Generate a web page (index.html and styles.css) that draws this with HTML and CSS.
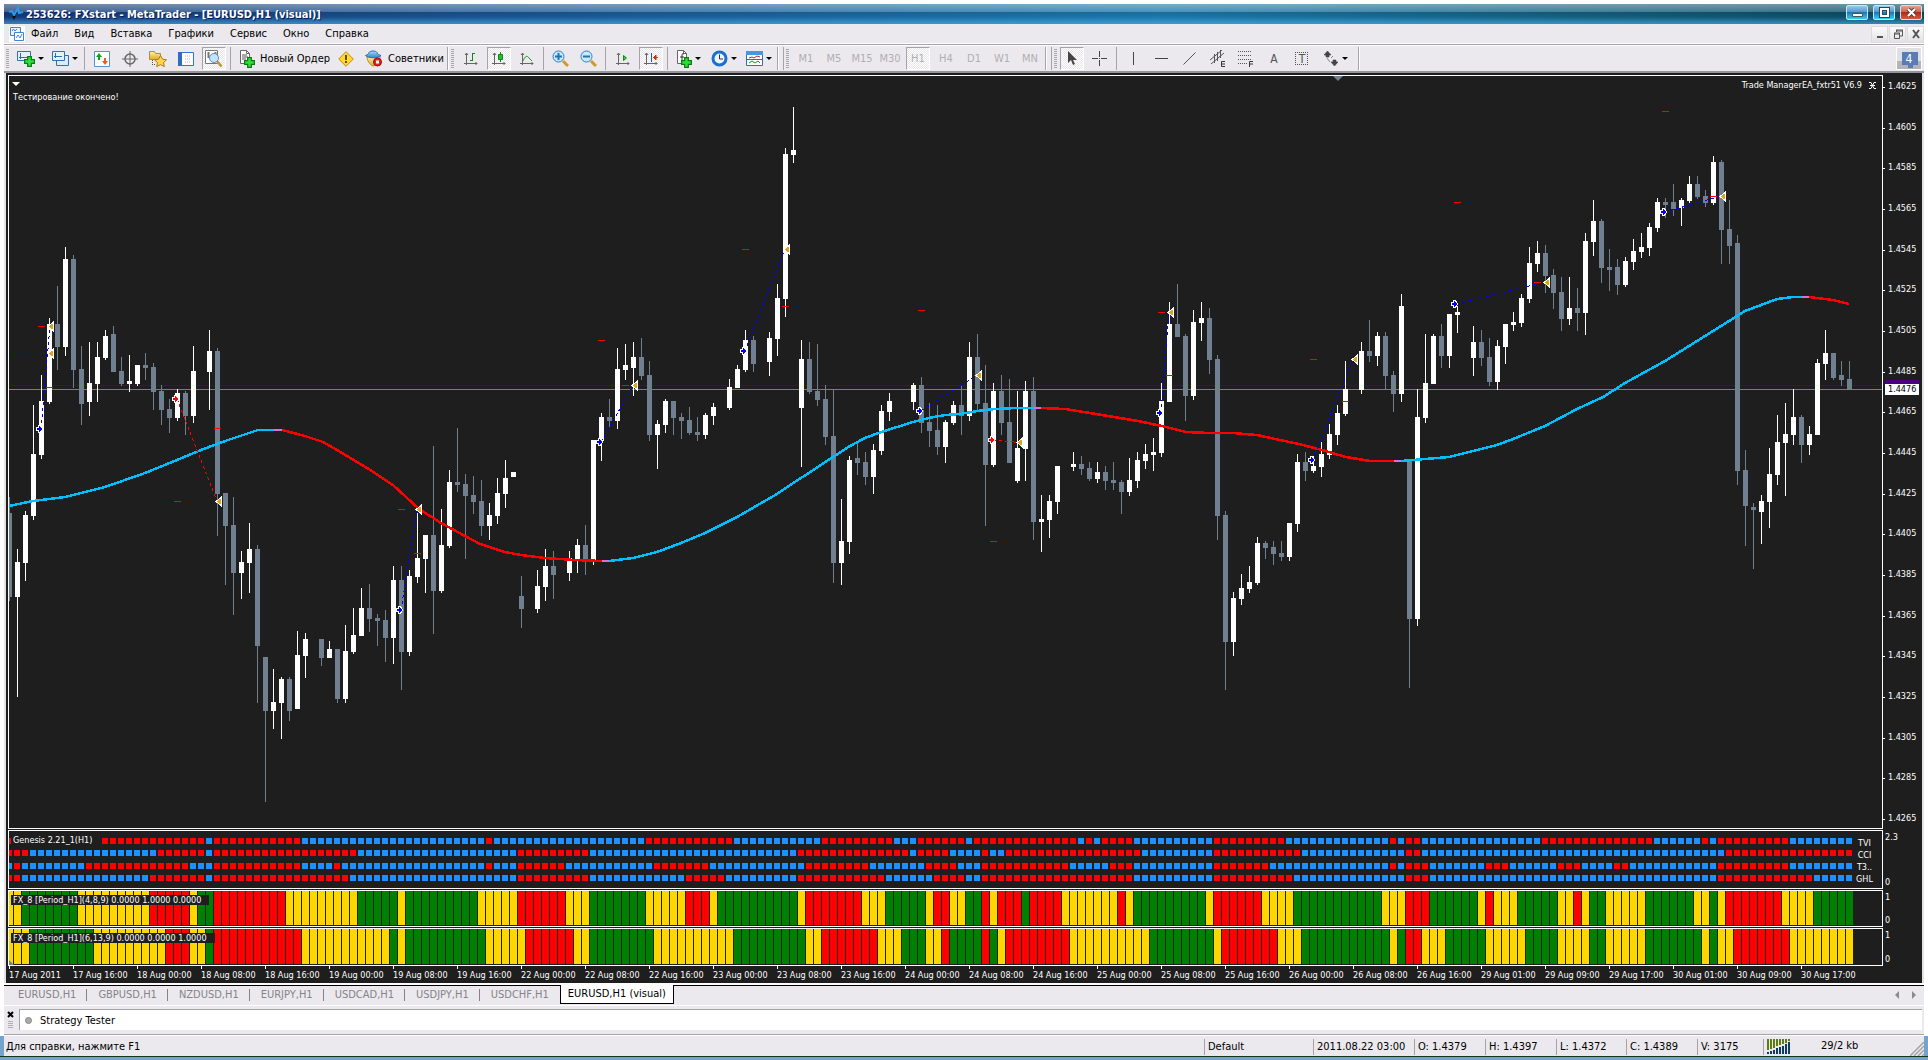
FILE: index.html
```html
<!DOCTYPE html>
<html lang="ru">
<head>
<meta charset="utf-8">
<title>253626: FXstart - MetaTrader - [EURUSD,H1 (visual)]</title>
<link rel="stylesheet" href="styles.css">
</head>
<body>
<svg class="defs" aria-hidden="true">
  <defs>
    <linearGradient id="gold" x1="0" y1="0" x2="0" y2="1"><stop offset="0" stop-color="#fff3a8"/><stop offset="1" stop-color="#e3a92c"/></linearGradient>
    <linearGradient id="bluehat" x1="0" y1="0" x2="0" y2="1"><stop offset="0" stop-color="#a8d8f8"/><stop offset="1" stop-color="#2f86c8"/></linearGradient>
    <symbol id="plus" viewBox="0 0 9 9"><path d="M3 .5h3V3h2.500v3H6v2.500H3V6H.5V3H3z" fill="#2fe03a" stroke="#0a7d12"/></symbol>
    <symbol id="axes" viewBox="0 0 14 14"><path d="M2.500 1v12M0 11.500h13M1 3l1.500-2L4 3M11.500 10l1.500 1.500L11.500 13" fill="none" stroke="#666"/></symbol>
    <symbol id="page" viewBox="0 0 12 14"><path d="M1.500.5h6l3 3v10h-9z" fill="#fff" stroke="#666"/><path d="M7.500.5v3h3" fill="none" stroke="#666"/></symbol>
  </defs>
</svg>
<div class="window">
  <header class="titlebar">
    <svg class="logo" width="16" height="16" viewBox="0 0 16 16"><path d="M1 7l3-1 2 4 4-7 1 5 4-1" fill="none" stroke="#2e9be8" stroke-width="2"/><path d="M4 11l2 4 2-4z" fill="#111"/></svg>
    <h1>253626: FXstart - MetaTrader - [EURUSD,H1 (visual)]</h1>
    <div class="caption">
      <button class="cap" aria-label="Minimize"><svg width="11" height="11" viewBox="0 0 11 11"><path d="M.5 6.500h10v3H.5z" fill="#fff" stroke="#456"/></svg></button>
      <button class="cap" aria-label="Maximize"><svg width="11" height="11" viewBox="0 0 11 11"><path d="M2 2h7v7H2z" fill="none" stroke="#345" stroke-width="4"/><path d="M2 2h7v7H2z" fill="none" stroke="#fff" stroke-width="2"/></svg></button>
      <button class="cap close" aria-label="Close"><svg width="11" height="11" viewBox="0 0 11 11"><path d="M2 2l7 7M9 2l-7 7" stroke="#544" stroke-width="4"/><path d="M2 2l7 7M9 2l-7 7" stroke="#fff" stroke-width="2"/></svg></button>
    </div>
  </header>
  <nav class="menubar">
    <svg class="mdi" width="16" height="16" viewBox="0 0 16 16"><rect width="16" height="16" fill="#fff"/><path d="M1.500 1.500h10v8h-10z" fill="#e8f3ff" stroke="#3b86d8"/><path d="M5.500 6.500h9v8h-9z" fill="#fff" stroke="#3b86d8"/><path d="M3 5l1.500-2L6 5l2-2M7 12l2-3 2 3 2-4" fill="none" stroke="#3b86d8"/></svg>
    <a href="#file">Файл</a><a href="#view">Вид</a><a href="#insert">Вставка</a><a href="#charts">Графики</a><a href="#tools">Сервис</a><a href="#window">Окно</a><a href="#help">Справка</a>
    <div class="mdibtns">
      <button aria-label="Minimize chart"><svg width="10" height="10" viewBox="0 0 10 10"><path d="M2 8h6" stroke="#555" stroke-width="2"/></svg></button>
      <button aria-label="Restore chart"><svg width="10" height="10" viewBox="0 0 10 10"><path d="M3 1h7M3 2h7M9.500 1v6H7M3.500 1v2" fill="none" stroke="#555"/><path d="M1 4h6M1 5h6M1.500 4v5.500h5V4" fill="none" stroke="#555"/></svg></button>
      <button aria-label="Close chart"><svg width="10" height="10" viewBox="0 0 10 10"><path d="M2 1l6 8M8 1L2 9" stroke="#555" stroke-width="2"/></svg></button>
    </div>
  </nav>
  <div class="toolbar">
    <div class="group">
      <i class="grip"></i>
      <button class="tb drop" aria-label="New chart"><svg width="18" height="16" viewBox="0 0 18 16"><path d="M.5.5h13v9H.5z" fill="#e4f2ff" stroke="#2b70b8"/><path d="M3.500 2v6M2 6.500h9" stroke="#2b70b8"/><use href="#plus" x="7" y="5" width="11" height="11"/></svg></button>
      <button class="tb drop" aria-label="Profiles"><svg width="17" height="15" viewBox="0 0 17 15"><path d="M4.500 4.500h12v10h-12z" fill="#dcebf8" stroke="#2b70b8"/><path d="M.5.5h12v9H.5z" fill="#e4f2ff" stroke="#2b70b8" stroke-width="1"/><path d="M3.500 2v5M2 5.500h8" stroke="#2b70b8"/></svg></button>
      <i class="sep"></i>
      <button class="tb" aria-label="Market Watch"><svg width="16" height="16" viewBox="0 0 16 16"><path d="M.5.5h15v15H.5z" fill="#fff" stroke="#4b95d8"/><path d="M2 6l3-4 3 4H6v3H4V6z" fill="#0aa31a"/><path d="M8 10h2V7h2v3h2l-3 4z" fill="#ee5a24"/></svg></button>
      <button class="tb" aria-label="Data Window"><svg width="16" height="16" viewBox="0 0 16 16"><circle cx="8" cy="8" r="5" fill="none" stroke="#666" stroke-width="1.500"/><path d="M8 0v16M0 8h16" stroke="#666"/></svg></button>
      <button class="tb" aria-label="Navigator"><svg width="18" height="17" viewBox="0 0 18 17"><path d="M.5 1.500h5l1 2h5v6H.5z" fill="url(#gold)" stroke="#c08a1c"/><path d="M11.500 5.500l2 3.700 4 .6-3 2.800.8 4-3.800-2-3.800 2 .8-4-3-2.800 4-.6z" fill="#ffd84a" stroke="#b07812"/><path d="M3.500 10v6M3 14.500h4" stroke="#555" stroke-dasharray="1 1"/></svg></button>
      <button class="tb" aria-label="Terminal"><svg width="16" height="14" viewBox="0 0 16 14"><path d="M.5.5h15v13H.5z" fill="#fff" stroke="#2c7ad0"/><path d="M0 0h4v14H0z" fill="#2c6fc0"/><path d="M7 4h6M7 7h6M7 10h6" stroke="#f0a0a0" stroke-dasharray="1 1"/></svg></button>
      <button class="tb on" aria-label="Strategy Tester"><svg width="18" height="17" viewBox="0 0 18 17"><path d="M.5.5h12v13H.5z" fill="#fff" stroke="#777"/><path d="M3.500 2v6M10.500 2v4" stroke="#777" stroke-width="2"/><circle cx="9" cy="8" r="4.500" fill="#c5e4fa" stroke="#5b8db8"/><path d="M12.500 11.500l4 5" stroke="#c8962c" stroke-width="2.500"/></svg></button>
      <i class="sep"></i>
      <button class="tb text"><svg width="16" height="18" viewBox="0 0 16 18"><use href="#page" width="12" height="14"/><path d="M3 5h5M3 7h6M3 9h4" stroke="#555"/><use href="#plus" x="5" y="7" width="11" height="11"/></svg>Новый Ордер</button>
      <button class="tb" aria-label="MetaEditor"><svg width="16" height="16" viewBox="0 0 16 16"><path d="M8 .7L15.300 8 8 15.300.7 8z" fill="#ffd92e" stroke="#c08a10"/><path d="M8 4v5M8 10v2" stroke="#6b4a00" stroke-width="2"/></svg></button>
      <button class="tb text"><svg width="18" height="17" viewBox="0 0 18 17"><path d="M2 6h13c0 6-2 9-7 10C5 15 2 11 2 6z" fill="url(#gold)" stroke="#c08a1c"/><path d="M.5 5.500c2-1 3-1 3.500-3C5 .5 11 .5 12 2.500c0 2 2 2 4 3-2 3-13 3-15.500 0z" fill="url(#bluehat)" stroke="#2a6ea8"/><circle cx="12.500" cy="12" r="4" fill="#e32222" stroke="#9c0d0d"/><path d="M11 10.500h3v3h-3z" fill="#fff"/></svg>Советники</button>
    </div>
    <div class="group">
      <i class="grip"></i>
      <button class="tb" aria-label="Bar chart"><svg width="14" height="14" viewBox="0 0 14 14"><use href="#axes"/><path d="M8.500 1v8M8.500 1.500H11M6 8.500h2.500" stroke="#0b8a18" fill="none"/></svg></button>
      <button class="tb on" aria-label="Candlesticks"><svg width="14" height="14" viewBox="0 0 14 14"><use href="#axes"/><path d="M8.500 0v10" stroke="#0b8a18"/><path d="M6.500 2.500h4v5h-4z" fill="#19c42a" stroke="#0b8a18"/></svg></button>
      <button class="tb" aria-label="Line chart"><svg width="14" height="14" viewBox="0 0 14 14"><use href="#axes"/><path d="M3 9c2-5 4-6 6-3l3 3" stroke="#1c9a28" fill="none"/></svg></button>
      <i class="sep"></i>
      <button class="tb" aria-label="Zoom in"><svg width="17" height="17" viewBox="0 0 17 17"><path d="M11 11l5 5" stroke="#cf9a26" stroke-width="3"/><circle cx="6.500" cy="6.500" r="5.500" fill="#c7e9fb" stroke="#2f7fc4"/><path d="M3 6.500h7M6.500 3v7" stroke="#2a6fb4" stroke-width="2"/></svg></button>
      <button class="tb" aria-label="Zoom out"><svg width="17" height="17" viewBox="0 0 17 17"><path d="M11 11l5 5" stroke="#cf9a26" stroke-width="3"/><circle cx="6.500" cy="6.500" r="5.500" fill="#c7e9fb" stroke="#2f7fc4"/><path d="M3 6.500h7" stroke="#2a6fb4" stroke-width="2"/></svg></button>
      <i class="sep"></i>
      <button class="tb" aria-label="Auto scroll"><svg width="14" height="14" viewBox="0 0 14 14"><use href="#axes"/><path d="M7.500 3.500v5l3-2.500z" fill="#3c4" stroke="#0b8a18"/></svg></button>
      <button class="tb on" aria-label="Chart shift"><svg width="14" height="14" viewBox="0 0 14 14"><use href="#axes"/><path d="M7.500 1v9" stroke="#1d5fa0"/><path d="M14 5.500H9M12 3L9.500 5.500 12 8z" fill="#c3380c" stroke="#c3380c"/></svg></button>
      <i class="sep"></i>
      <button class="tb drop" aria-label="Indicators"><svg width="16" height="18" viewBox="0 0 16 18"><use href="#page" width="12" height="14"/><path d="M8 4c-2-1-2 0-2 2v5M4 7h4" fill="none" stroke="#333"/><use href="#plus" x="5" y="7" width="11" height="11"/></svg></button>
      <button class="tb drop" aria-label="Periods"><svg width="17" height="17" viewBox="0 0 17 17"><circle cx="8.500" cy="8.500" r="6.500" fill="#eef6fc" stroke="#1a6fd0" stroke-width="3"/><path d="M8.500 4.500v4.500H12" fill="none" stroke="#334"/></svg></button>
      <button class="tb drop" aria-label="Templates"><svg width="17" height="15" viewBox="0 0 17 15"><path d="M.5.5h16v14H.5z" fill="#fff" stroke="#2c70b8"/><path d="M0 0h17v4H0z" fill="#4a96dc"/><path d="M1 8.500h15" stroke="#2c70b8"/><path d="M3 7l3-1 2 1 3-2 3 1" fill="none" stroke="#b03010"/><path d="M3 12l3-2 3 2 3-2 2 2" fill="none" stroke="#1c9a28"/></svg></button>
    </div>
    <div class="group apart periods">
      <i class="grip"></i>
      <button class="tb">M1</button><button class="tb">M5</button><button class="tb">M15</button><button class="tb">M30</button><button class="tb on">H1</button><button class="tb">H4</button><button class="tb">D1</button><button class="tb">W1</button><button class="tb">MN</button>
    </div>
    <div class="group apart">
      <i class="grip"></i>
      <button class="tb on" aria-label="Cursor"><svg width="10" height="15" viewBox="0 0 10 15"><path d="M1 0v12l3-3 2 5 2-1-2-4h4z" fill="#444"/></svg></button>
      <button class="tb" aria-label="Crosshair"><svg width="15" height="15" viewBox="0 0 15 15"><path d="M7.500 0v6M7.500 9v6M0 7.500h6M9 7.500h6M7 7.500h1" stroke="#444"/></svg></button>
      <i class="sep"></i>
      <button class="tb" aria-label="Vertical line"><svg width="14" height="13" viewBox="0 0 14 13"><path d="M6.500 0v13" stroke="#444"/></svg></button>
      <button class="tb" aria-label="Horizontal line"><svg width="14" height="13" viewBox="0 0 14 13"><path d="M0 6.500h13" stroke="#444"/></svg></button>
      <button class="tb" aria-label="Trend line"><svg width="14" height="13" viewBox="0 0 14 13"><path d="M.5 12.500l12-12" stroke="#555"/></svg></button>
      <button class="tb" aria-label="Channel"><svg width="16" height="17" viewBox="0 0 16 17"><path d="M0 10L12 0M1 14L14 3M4.500 4v9M7.500 2v9M10.500 0v8" stroke="#555" fill="none"/><path d="M15 11.500h-3.500v5H15M11.500 14H15" fill="none" stroke="#333"/></svg></button>
      <button class="tb" aria-label="Fibonacci"><svg width="16" height="17" viewBox="0 0 16 17"><path d="M0 1.500h14M0 5.500h14M0 9.500h14M0 13.500h9" stroke="#555" stroke-dasharray="1 1"/><path d="M15 11.500h-3.500V17M11.500 14H15" fill="none" stroke="#333"/></svg></button>
      <button class="tb glyph" aria-label="Text">A</button>
      <button class="tb glyph" aria-label="Label"><span class="boxed">T</span></button>
      <button class="tb drop arrows" aria-label="Arrows"><svg width="14" height="15" viewBox="0 0 14 15"><path d="M0 4l3.500-4L7 4H5v2H2V4zM7 11h2V9h3v2h2l-3.500 4zM3 7l3 4M7 7l2-2" fill="#444" stroke="#444" stroke-width=".6"/></svg></button>
    </div>
    <button class="news">4</button>
  </div>

  <main class="chart">
    <section class="pane price">
      <div class="plot">
        <svg id="priceplot" viewBox="9 76 1873 752" preserveAspectRatio="none"></svg>
        <i class="menuarrow"></i>
        <span class="comment">Тестирование окончено!</span>
        <i class="shift"></i>
        <span class="expert">Trade ManagerEA_fxtr51 V6.9 <svg width="7" height="7" viewBox="0 0 7 7"><path d="M0 .5h2l3 6h2M7 .5H5l-3 6H0M1 3.500h5" fill="none" stroke="#fff"/></svg></span>
      </div>
      <div class="scale">
        <span>1.4625</span><span>1.4605</span><span>1.4585</span><span>1.4565</span><span>1.4545</span><span>1.4525</span><span>1.4505</span><span>1.4485</span><span>1.4465</span><span>1.4445</span><span>1.4425</span><span>1.4405</span><span>1.4385</span><span>1.4365</span><span>1.4345</span><span>1.4325</span><span>1.4305</span><span>1.4285</span><span>1.4265</span>
        <b class="bid">1.4476</b>
      </div>
    </section>
    <section class="pane genesis">
      <div class="plot">
        <svg id="genesisplot" viewBox="9 831 1873 57" preserveAspectRatio="none"></svg>
        <span class="label">Genesis 2.21_1(H1)</span>
        <ul class="rows"><li>TVI</li><li>CCI</li><li>T3..</li><li>GHL</li></ul>
      </div>
      <div class="scale"><span>2.3</span><span>0</span></div>
    </section>
    <section class="pane fx">
      <div class="plot">
        <svg id="fx1plot" viewBox="9 0 1873 35" preserveAspectRatio="none"></svg>
        <span class="label">FX_8 [Period_H1](4,8,9) 0.0000 1.0000 0.0000</span>
      </div>
      <div class="scale"><span>1</span><span>0</span></div>
    </section>
    <section class="pane fx last">
      <div class="plot">
        <svg id="fx2plot" viewBox="9 0 1873 36" preserveAspectRatio="none"></svg>
        <span class="label">FX_8 [Period_H1](6,13,9) 0.0000 0.0000 1.0000</span>
      </div>
      <div class="scale"><span>1</span><span>0</span></div>
    </section>
    <div class="dates">
      <span>17 Aug 2011</span><span>17 Aug 16:00</span><span>18 Aug 00:00</span><span>18 Aug 08:00</span><span>18 Aug 16:00</span><span>19 Aug 00:00</span><span>19 Aug 08:00</span><span>19 Aug 16:00</span><span>22 Aug 00:00</span><span>22 Aug 08:00</span><span>22 Aug 16:00</span><span>23 Aug 00:00</span><span>23 Aug 08:00</span><span>23 Aug 16:00</span><span>24 Aug 00:00</span><span>24 Aug 08:00</span><span>24 Aug 16:00</span><span>25 Aug 00:00</span><span>25 Aug 08:00</span><span>25 Aug 16:00</span><span>26 Aug 00:00</span><span>26 Aug 08:00</span><span>26 Aug 16:00</span><span>29 Aug 01:00</span><span>29 Aug 09:00</span><span>29 Aug 17:00</span><span>30 Aug 01:00</span><span>30 Aug 09:00</span><span>30 Aug 17:00</span>
    </div>
  </main>

  <div class="tabs">
    <button>EURUSD,H1</button><button>GBPUSD,H1</button><button>NZDUSD,H1</button><button>EURJPY,H1</button><button>USDCAD,H1</button><button>USDJPY,H1</button><button>USDCHF,H1</button><button class="active">EURUSD,H1 (visual)</button>
    <svg class="pager" width="22" height="8" viewBox="0 0 22 8"><path d="M4 0v8L0 4zM17 0v8l4-4z" fill="#8a8a90"/></svg>
  </div>
  <div class="tester">
    <div class="handle"><svg width="7" height="20" viewBox="0 0 7 20"><path d="M1 1l5 5M6 1L1 6" stroke="#000" stroke-width="2"/><path d="M1 10.500h5M1 12.500h5M1 14.500h5M1 16.500h5" stroke="#b0aeb4"/></svg></div>
    <div class="testerbox"><i class="dot"></i>Strategy Tester</div>
  </div>
  <footer class="status">
    <span class="hint">Для справки, нажмите F1</span>
    <span class="s108">Default</span><span class="s100">2011.08.22 03:00</span><span class="s72">O: 1.4379</span><span class="s72">H: 1.4397</span><span class="s68">L: 1.4372</span><span class="s72">C: 1.4389</span><span class="s66">V: 3175</span>
    <span class="net"><svg width="23" height="15" viewBox="0 0 23 15"><path d="M1 0v11M4 0v10M7 0v9M10 0v7M13 0v6M16 0v5M19 0v4M22 0v2" stroke="#5c7d10" stroke-width="2"/><path d="M1 13v2M4 12v3M7 11v4M10 9v6M13 8v7M16 7v8M19 5v10M22 3v12" stroke="#0c3d60" stroke-width="2"/></svg>29/2 kb</span>
    <svg class="resize" width="14" height="14" viewBox="0 0 14 14"><path d="M0 14L14 0M4 14L14 4M8 14l6-6M12 14l2-2" stroke="#a5a3a8" stroke-width="1.500"/></svg>
  </footer>
</div>
<script src="chart.js"></script>
</body>
</html>
```
FILE: styles.css
```css
* { box-sizing: border-box; }
body {
  margin: 0;
  background: #fff;
  color: #000;
  font: 11px/14px "DejaVu Sans Condensed", "DejaVu Sans", sans-serif;
}
button { font: inherit; color: inherit; border: 0; padding: 0; background: none; }
svg { display: block; }
i, b { font-style: normal; font-weight: normal; }
.defs { position: absolute; width: 0; height: 0; }
.window {
  min-height: 100vh;
  display: flex;
  flex-direction: column;
  padding: 4px 4px 0;
}

.titlebar {
  flex: none;
  height: 20px;
  display: flex;
  align-items: flex-start;
  padding: 1px 2px 0 4px;
  background:
    linear-gradient(rgba(255,255,255,.4) 0, rgba(255,255,255,.2) 8px, rgba(0,0,0,.1) 8px, rgba(0,0,0,0) 13px, rgba(80,180,235,.55) 19px),
    linear-gradient(90deg, #163a78, #1b5f9a 35%, #1c78ac 60%, #14607f 82%, #0b4a62);
}
.titlebar h1 {
  flex: 1;
  margin: 3px 0 0 2px;
  font-size: 11px;
  font-weight: bold;
  color: #fff;
  text-shadow: 1px 1px 0 #06195c;
  white-space: nowrap;
}
.caption { display: flex; gap: 5px; }
.cap {
  width: 22px;
  height: 15px;
  display: grid;
  place-items: center;
  border: 1px solid #cfe3ee;
  border-radius: 2px;
  background: linear-gradient(#9cc8e8, #4a94d0 50%, #1c78b8 50%, #2fd0f4);
}
.cap.close { background: linear-gradient(#eaa090, #d05c4a 50%, #b02a18 50%, #d85a3c); }

.menubar {
  flex: none;
  height: 19px;
  display: flex;
  align-items: center;
  gap: 16px;
  padding: 1px 0 0 5px;
  background: #ebe9ed;
}
.menubar .mdi { margin-right: -10px; }
.menubar a { color: #000; text-decoration: none; }
.mdibtns { margin-left: auto; display: flex; gap: 1px; }
.mdibtns button {
  width: 17px;
  height: 17px;
  display: grid;
  place-items: center;
  background: linear-gradient(#fbfbfb, #e2e2e4);
  border: 1px solid #dddbe0;
}

.toolbar {
  flex: none;
  height: 30px;
  display: flex;
  align-items: stretch;
  background: #ebe9ed;
  box-shadow: inset 0 1px #fff, inset 0 2px #a5a3a8, inset 0 3px #fff, inset 0 -2px #96949a;
  padding: 4px 2px 3px 0;
}
.group {
  display: flex;
  align-items: center;
  padding-right: 1px;
  border-right: 1px solid #a5a3a8;
  box-shadow: 1px 0 #fff;
  margin-right: 1px;
}
.group.apart {
  margin-left: 4px;
  border-left: 1px solid #a5a3a8;
}
.grip {
  width: 3px;
  height: 20px;
  margin: 0 0 0 2px;
  background: repeating-linear-gradient(#a9a7ac 0 1px, transparent 1px 2px);
}
.group .grip + .tb { margin-left: 3px; }
.tb {
  width: 28px;
  height: 23px;
  display: flex;
  align-items: center;
  justify-content: center;
  white-space: nowrap;
}
.tb.on {
  width: 24px;
  margin: 0 2px;
  border: 1px solid;
  border-color: #a5a3a8 #fff #fff #a5a3a8;
  background: repeating-conic-gradient(#fff 0 25%, #e8e6ea 0 50%) 0 0 / 2px 2px;
}
.tb.drop { width: 35px; justify-content: flex-start; padding-left: 5px; gap: 3px; }
.tb.drop.arrows { width: 41px; padding-left: 8px; gap: 4px; }
.tb.drop::after {
  content: "";
  border: solid transparent;
  border-width: 3px 3px 0;
  border-top-color: #000;
}
.tb.text { width: auto; gap: 5px; padding: 0 2px 0 5px; }
.sep { width: 1px; height: 23px; margin: 0 3px 0 2px; background: #a5a3a8; }
.periods { color: #b0aeb3; }
.glyph { color: #555; font-size: 12px; }
.boxed { width: 13px; height: 13px; line-height: 12px; border: 1px dotted #555; }
.news {
  width: 26px;
  margin-left: auto;
  color: #fff;
  font-size: 12px;
  background:
    linear-gradient(#5a7cb4, #5a7cb4) 5px 4px / 16px 13px no-repeat,
    linear-gradient(#5a7cb4, #5a7cb4) 11px 15px / 5px 5px no-repeat,
    linear-gradient(#dde1e6 60%, #b4b4b8 60%);
  border: 1px solid #fff;
}

.chart {
  flex: 1;
  display: flex;
  flex-direction: column;
  gap: 1px;
  padding: 2px 0 0 2px;
  border: solid;
  border-width: 0 2px;
  border-color: #96949a #e3e1e6;
  background: #1e1e1e;
  color: #fff;
  font-size: 9px;
  line-height: 10px;
}
.pane { display: grid; grid-template-columns: minmax(0, 1fr) 39px; flex: none; }
.price { flex: 1; min-height: 300px; }
.genesis { height: 59px; }
.fx { height: 37px; }
.fx.last { height: 38px; }
.plot { position: relative; border: 1px solid #fff; min-width: 0; min-height: 0; overflow: hidden; }
.plot > svg { position: absolute; inset: 0; width: 100%; height: 100%; }
.scale {
  position: relative;
  display: flex;
  flex-direction: column;
  justify-content: space-between;
  padding: 2px 0;
}
.scale span { padding-left: 2px; }
.price .scale { padding: 6px 0 6px; }
.price .scale span { position: relative; padding-left: 5px; }
.price .scale span::before {
  content: "";
  position: absolute;
  left: 0;
  top: 6px;
  width: 2px;
  height: 1px;
  background: #fff;
}
.bid {
  position: absolute;
  left: 2px;
  right: 3px;
  top: 41%;
  height: 11px;
  padding-left: 3px;
  background: #fff;
  color: #000;
  box-shadow: 0 -4px #4b0082;
}
.menuarrow, .shift {
  position: absolute;
  top: 6px;
  left: 3px;
  border: solid transparent;
  border-width: 4px 4px 0;
  border-top-color: #fff;
}
.shift { top: 0; left: 71%; margin-left: -6px; border-width: 5px 5px 0; border-top-color: #708090; }
.comment { position: absolute; left: 4px; top: 16px; }
.expert { position: absolute; right: 6px; top: 4px; display: flex; align-items: center; gap: 7px; }
.label { position: absolute; left: 2px; top: 4px; padding: 0 8px 0 2px; background: #1e1e1e; }
.rows {
  position: absolute;
  right: 8px;
  top: 6px;
  width: 19px;
  margin: 0;
  padding: 0;
  list-style: none;
  text-align: center;
  line-height: 12px;
}
.dates {
  flex: none;
  height: 17px;
  display: grid;
  grid-template-columns: repeat(29, minmax(0, 64fr)) minmax(0, 17fr);
  margin: -1px 40px 0 1px;
}
.dates span { position: relative; padding-top: 4px; white-space: nowrap; }
.dates span::before { content: ""; position: absolute; left: 0; top: 0; width: 1px; height: 3px; background: #fff; }

.tabs {
  flex: none;
  height: 23px;
  display: flex;
  align-items: flex-start;
  padding: 0 7px 0 3px;
  border-top: 2px solid #fff;
  border-bottom: 1px solid #fff;
  background: #ebe9ed;
  box-shadow: inset 0 1px #000;
  color: #85838a;
}
.tabs button { position: relative; height: 19px; padding: 0 11px; }
.tabs button:not(.active)::after {
  content: "";
  position: absolute;
  right: 0;
  top: 4px;
  height: 12px;
  width: 1px;
  background: #85838a;
}
.tabs button:nth-last-of-type(2)::after { display: none; }
.tabs .active { background: #fff; color: #000; border: 1px solid #000; border-top: 0; padding: 0 7px; }
.tabs .pager { margin: 6px 0 0 auto; }

.tester {
  flex: none;
  height: 30px;
  display: flex;
  padding: 3px 2px 5px 3px;
  gap: 4px;
  background: #ebe9ed;
  border-bottom: 1px solid #fff;
  box-shadow: inset 0 -1px #a5a3a8;
}
.handle { width: 8px; padding-top: 2px; }
.testerbox {
  flex: 1;
  display: flex;
  align-items: center;
  gap: 8px;
  padding: 1px 0 0 5px;
  background: #fff;
  border-top: 1px solid #a5a3a8;
  border-left: 1px solid #a5a3a8;
}
.dot { width: 7px; height: 7px; border-radius: 4px; background: #aaa; border: 1px solid #888; }

.status {
  flex: none;
  height: 24px;
  display: flex;
  align-items: stretch;
  margin: 0 -4px;
  padding: 0 4px;
  line-height: 22px;
  background: linear-gradient(#ebe9ed, #ebe9ed) 4px 0 / calc(100% - 8px) 20px no-repeat, linear-gradient(#16301c, #16301c) 0 20px / 100% 1px no-repeat, #74a3cd;
}
.status span { position: relative; padding-left: 4px; height: 20px; white-space: nowrap; }
.status .hint { flex: 1; padding-left: 2px; }
.status span:not(.hint)::before {
  content: "";
  position: absolute;
  left: 0;
  top: 3px;
  width: 1px;
  height: 16px;
  background: #a5a3a8;
}
.s108 { width: 109px; }
.s100 { width: 101px; }
.s72 { width: 71px; }
.s68 { width: 70px; }
.s66 { width: 66px; }
.net { width: 147px; display: flex; align-items: center; gap: 31px; }
.resize { margin: 6px 0 0; }
```
FILE: chart.js
```js
// Bars are one every 8 units; direction, then high, body top, body bottom and low.
// Each block keeps its own vertical scale: y = top + value / unit.
const blocks = [
  { top: 230, unit: 2.703, bars: `d 722 765 992 1003|u 862 898 992 1263|u 760 770 900 949|u 473 606 773 784|u 392 462 608 619|u 238 254 465 470|d 151 254 316 378|u 46 78 316 341|d 68 78 378 427|d 314 376 470 527|u 303 414 465 503|u 303 343 416 465|u 270 287 346 351|d 260 281 384 384|d 343 381 416 422|u 338 408 416 438|u 365 365 416 422|d 333 365 373 406|d 360 370 438 487|d 419 435 487 527|d 457 484 508 549|u 430 441 508 516|d 435 441 503 554|u 314 381 503 522||u 270 327 384 487|d 319 327 714 827|d 711 711 800 960|d 722 798 927 1041|u 868 898 927 998|u 792 862 900 981|d 852 862 1125 1279|d 1154 1154 1300 1546|u 1187 1276 1300 1349|u 1208 1214 1279 1376|d 1208 1214 1300 1327|u 1084 1149 1295 1295|u 1089 1106 1152 1211||d 1106 1106 1157 1179|u 1111 1133 1157 1157|d 1133 1133 1268 1279|u 1068 1138 1268 1279|u 1022 1095 1141 1146|u 968 1022 1098 1098|d 957 1022 1052 1087|d 1038 1049 1057 1125|d 1027 1054 1103 1168|u 908 946 1103 1173|d 908 946 1141 1244|u 919 935 1141 1152|u 765 887 938 954|u 825 825 889 981|d 584 825 976 1092|u 754 852 976 981|u 649 681 854 860|d 535 681 689 708|d 660 687 719 889|d 665 716 735 768` },
  { top: 100, unit: 2.904, bars: `d 1103 1164 1237 1266|u 1170 1205 1237 1278|u 1098 1141 1208 1231|u 1045 1098 1144 1185|u 1080 1080 1095 1095|d 1382 1440 1478 1533||u 1365 1411 1478 1490|u 1304 1353 1414 1455|d 1310 1353 1379 1449||u 1310 1330 1373 1397|u 1275 1292 1333 1373|d 1234 1292 1338 1379|u 987 987 1338 1350|u 909 920 990 1048|d 868 920 932 950|u 720 781 932 955|u 709 769 784 813|u 703 746 778 859|d 691 746 801 813|d 758 799 973 990|u 929 941 973 1071|u 868 874 944 967|d 874 874 923 973|d 909 920 932 984|d 891 929 967 973|d 920 964 973 990|u 909 915 973 984|u 880 891 918 944||u 810 833 894 900|u 769 781 836 836|u 668 697 784 790|d 685 697 767 790||u 674 691 761 801|u 534 575 694 743|u 139 157 578 630|u 20 145 160 183|u 697 752 894 1066|d 703 752 848 854|d 709 845 871 889|d 828 868 979 1002|d 842 976 1344 1402|u 1159 1281 1344 1408|u 1034 1045 1283 1318|d 996 1040 1054 1089|d 1022 1051 1095 1118|u 999 1016 1095 1144|u 886 903 1019 1031|u 851 874 906 932|||u 822 828 877 900|d 804 828 938 967|d 880 935 961 1008|d 886 958 1008 1031|u 929 935 1008 1054|u 874 886 938 944` },
  { top: 280, unit: 3, bars: `d 318 375 408 465|u 186 231 408 423|d 162 231 372 390|d 255 369 555 738|u 309 333 555 561|d 285 333 429 465|d 297 426 549 549|u 333 504 603 609|u 303 333 507 603|d 291 333 726 780|u 645 717 726 816|u 645 663 720 774|u 558 558 666 702||u 516 552 561 573|d 528 552 567 585|d 546 564 597 603|u 546 576 597 609|d 558 576 603 630|d 546 600 609 630|d 600 606 636 702|u 534 600 636 648|u 516 540 603 624|u 492 522 543 567|u 474 516 525 573|u 309 363 519 531|u 66 132 366 366|d 12 132 171 171|d 162 168 348 423|u 90 126 348 360|u 66 114 129 183|d 84 114 240 282|d 225 237 708 780|d 693 705 1086 1230|u 936 954 1086 1128|u 882 924 957 975|u 858 906 927 939|u 771 789 909 915|d 783 789 804 837|d 783 801 822 855|d 783 819 831 843|u 729 729 831 843|u 522 546 732 756|d 516 546 573 603|u 528 558 573 579|u 486 522 561 591|u 432 462 525 537|u 375 399 465 495|u 243 327 402 408||u 186 213 330 342|d 120 213 228 246|u 156 168 228 258|d 156 168 288 327|d 273 285 342 396|u 42 78 342 366|d 543 543 1017 1224|u 327 411 1017 1038|u 162 309 414 429|u 162 168 312 312` },
  { top: 80, unit: 2.613, bars: `d 638 669 721 753|u 612 612 721 753|u 590 606 614 661||u 643 685 727 774|d 653 685 727 747|d 674 724 789 800|u 679 695 789 810|u 638 638 698 742|u 606 632 640 656|u 559 570 635 645|u 436 478 572 582|u 421 452 481 502|d 431 452 512 557|d 494 510 557 598|d 515 554 625 656|u 515 596 625 640|d 544 596 609 656|u 400 421 609 666|u 314 368 423 460|d 363 368 491 531|d 442 489 497 551|d 468 489 536 562|u 463 473 536 541|u 416 447 476 497|u 400 436 449 465|u 374 384 439 460|u 308 319 387 397|d 308 319 327 361|d 272 319 337 355|u 308 314 335 382|u 251 272 316 321|d 251 272 306 311|d 287 303 321 332|u 199 214 321 327|d 209 214 392 481|d 314 389 434 481|d 405 426 1022 1058|d 967 1019 1113 1218|d 1105 1116 1124 1278|u 1085 1100 1129 1213|u 962 1030 1103 1171|u 875 946 1032 1058|u 844 925 949 1087|u 808 881 928 954|d 875 881 954 1001|u 904 925 954 980|u 729 740 928 928|u 653 713 742 784|d 713 713 779 784|d 734 771 784 800|d 734 781 808 808` },
];

const rect = (x, y, w, h, fill) => `<rect x="${x}" y="${y}" width="${w}" height="${h}" fill="${fill}"/>`;
const line = (points, color, width, extra = "") =>
  `<polyline points="${points}" fill="none" stroke="${color}" stroke-width="${width}" ${extra}/>`;

let price = rect(9, 385, 1873, 1, "#4b0082") + rect(9, 389, 1873, 1, "#708090");

let index = 0;
for (const { top, unit, bars } of blocks) {
  for (const bar of bars.split("|")) {
    if (bar) {
      const [dir, ...values] = bar.split(" ");
      const [high, open, close, low] = values.map(v => Math.round(top + v / unit));
      const color = dir === "u" ? "#fff" : "#708090";
      const x = 9 + 8 * index;
      price += rect(x, high, 1, low - high, color) + rect(x - 2, open, 5, close - open, color);
    }
    index++;
  }
}

// Moving average, coloured by slope.
const up = "#00bfff", down = "#ff0000", flat = "#da70d6";
price += [
  [up, "9,506 33,501 65,497 105,487 145,473 177,460 201,450 225,441 240,436 258,430 274,430"],
  [flat, "274,430 282,430"],
  [down, "282,430 305,436 323,442 337,450 367,468 393,485 419,509 441,523 465,536 480,544 505,552 521,555 545,558 575,560 602,561"],
  [flat, "602,561 609,561"],
  [up, "609,561 633,558 657,552 681,543 705,533 737,517 777,494 801,478 833,457 850,446 865,438 881,432 897,427 913,422 929,418 945,415 960,414 977,411 995,409 1017,408 1034,408"],
  [flat, "1034,408 1041,408"],
  [down, "1041,408 1065,409 1090,413 1114,417 1138,421 1162,426 1186,432 1210,433 1233,433 1257,435 1275,439 1299,444 1322,450 1346,457 1370,461 1394,461"],
  [flat, "1394,461 1401,461"],
  [up, "1401,461 1425,459 1449,457 1473,451 1497,445 1513,439 1545,426 1577,409 1603,397 1625,383 1665,361 1697,341 1737,316 1745,311 1769,302 1777,299 1793,297 1802,297"],
  [flat, "1802,297 1809,297"],
  [down, "1809,297 1833,300 1849,304"],
].map(([color, points]) => line(points, color, 2.5)).join("");

// Closed trades: dashed link from entry to exit.
const trades = [
  ["#00f", "9,342 51,341"], ["#00f", "41,429 50,326"], ["#f00", "177,399 217,501"], ["#00f", "401,610 417,509"],
  ["#00f", "601,442 633,386"], ["#00f", "745,351 785,249"], ["#00f", "921,411 977,375"], ["#f00", "993,440 1017,442"],
  ["#00f", "1161,413 1169,312"], ["#00f", "1313,460 1353,359"], ["#00f", "1457,304 1545,282"], ["#00f", "1665,212 1721,196"],
].map(([color, points]) => [color, points.replace("9,342 51,341", "9,354 51,353")]);
price += trades.map(([color, points]) => line(points, color, 1, 'stroke-dasharray="3 3"')).join("");

const stops = [[41,326],[49,387],[217,428],[177,501],[401,509],[417,553],[601,340],[625,385],[745,249],[785,306],[921,310],[977,375],[1017,442],[993,541],[1161,312],[1169,375],[1313,359],[1345,401],[1457,202],[1537,282],[1665,111],[1713,196]];
price += stops.map(([x, y]) => rect(x - 3, y, 7, 1, "#f00")).join("");

const entries = [[39,429,"#00f"],[399,610,"#00f"],[599,442,"#00f"],[743,351,"#00f"],[919,411,"#00f"],[1159,413,"#00f"],[1311,460,"#00f"],[1454,304,"#00f"],[1663,212,"#00f"],[175,399,"#f00"],[991,440,"#f00"]];
price += entries.map(([x, y, color]) =>
  `<path transform="translate(${x} ${y})" d="M-3-1.500h2v-2h2l3 3.500-3 3.500h-2v-2h-2z" fill="${color}" stroke="#fff"/>`).join("");

const exits = [[51,326],[51,353],[219,501],[419,509],[635,385],[787,249],[979,375],[1020,442],[1171,312],[1355,359],[1547,282],[1723,196]];
price += exits.map(([x, y]) =>
  `<path transform="translate(${x} ${y})" d="M-3 .5l5-4v8z" fill="#daa520" stroke="#fff"/>`).join("");

document.getElementById("priceplot").innerHTML = `<g shape-rendering="crispEdges">${price}</g>`;

// Run-length strings: a colour letter and the number of bars it lasts.
const colors = { R: "#ff0000", B: "#1e90ff", Y: "#ffd700", G: "#008000" };
function runs(text, y, width, height) {
  let out = "", i = 0;
  for (const run of text.split(" ")) {
    for (let n = Number(run.slice(1)); n > 0; n--) out += rect(6 + 8 * i++, y, width, height, colors[run[0]]);
  }
  return out;
}

document.getElementById("genesisplot").innerHTML =
  runs("R25 B1 R11 B23 R1 B19 R11 B11 R9 B3 R6 B1 R13 B1 R1 B1 R4 B10 R9 B13 R1 B1 R2 B15 R14 B6 R1 B1 R9 B8", 838, 6, 6) +
  runs("R3 B16 R6 B1 R18 B20 R9 B26 R14 B1 R4 B4 R1 B2 R17 B9 R11 B13 R2 B38 R16", 850, 6, 6) +
  runs("B1 R1 B8 R13 B3 R11 B4 R1 B18 R1 B3 R6 B11 R7 B12 R8 B7 R4 B3 R11 B5 R3 B10 R7 B15 R1 B1 R3 B7 R3 B6 R3 B4 R2 B11 R9 B8", 863, 6, 6) +
  runs("R2 B16 R7 B1 R17 B21 R9 B12 R5 B9 R11 B6 R4 B2 R19 B10 R10 B14 R3 B36 R12 B5", 875, 6, 6);
document.getElementById("fx1plot").innerHTML =
  runs("Y2 G7 Y9 R5 Y1 G2 R9 Y9 G5 Y1 G9 Y5 R6 Y3 G7 Y5 R3 Y1 G10 Y1 R7 Y3 G5 Y1 R2 Y2 G2 R1 Y1 R3 G1 R4 Y7 R1 Y1 G9 Y1 R6 Y4 G11 Y3 R3 G6 Y1 R1 Y3 G5 Y2 R1 Y1 G2 Y5 G6 Y2 G1 Y1 R7 Y4 G5", 0, 7, 34);
document.getElementById("fx2plot").innerHTML =
  runs("Y3 G8 Y9 R3 Y2 G1 R11 Y11 G1 Y1 G10 Y5 R6 Y2 G8 Y10 G9 Y2 R7 Y3 G3 Y2 R1 G4 R1 G1 Y1 R8 Y10 G8 Y1 R7 Y3 G11 Y1 G1 R2 Y3 G5 Y5 G4 Y4 G2 Y5 G7 Y1 G1 Y2 R7 Y8", 0, 7, 35) +
  '<path d="M9 31v5h5z" fill="#708090"/>';
```
